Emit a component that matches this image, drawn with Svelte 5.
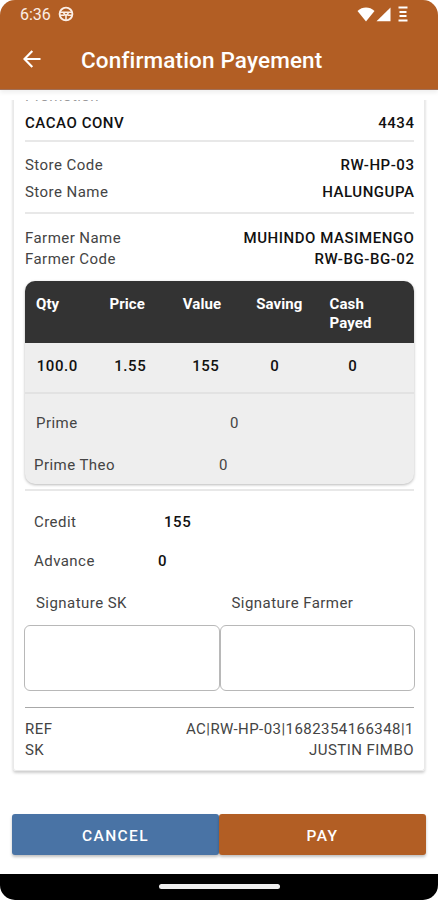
<script>
    const stores = [
        { label: 'Store Code', value: 'RW-HP-03' },
        { label: 'Store Name', value: 'HALUNGUPA' }
    ];

    const farmer = [
        { label: 'Farmer Name', value: 'MUHINDO MASIMENGO' },
        { label: 'Farmer Code', value: 'RW-BG-BG-02' }
    ];

    const columns = ['Qty', 'Price', 'Value', 'Saving', 'Cash Payed'];
    const amounts = ['100.0', '1.55', '155', '0', '0'];

    const references = [
        { label: 'REF', value: 'AC|RW-HP-03|1682354166348|1' },
        { label: 'SK', value: 'JUSTIN FIMBO' }
    ];
</script>

<div class="screen">
    <header>
        <div class="status-bar">
            <span class="time">6:36</span>
            <svg class="status-wheel" viewBox="0 0 16 16" width="16" height="16">
                <circle cx="8" cy="8" r="6.4" fill="none" stroke="#fbeee6" stroke-width="1.9" />
                <path d="M2 6.300h12M2 9.300h4.500M9.500 9.300H14M5.500 7l2.500 2.500L10.500 7M8 9v5" fill="none" stroke="#fbeee6" stroke-width="1.600" />
            </svg>
            <div class="status-right">
                <svg viewBox="0 0 18 15" width="18" height="15">
                    <path d="M0.5 4C5.5-.6 12.5-.6 17.5 4L9 14.5z" fill="#fff" />
                </svg>
                <svg viewBox="0 0 15 15" width="15" height="15">
                    <path d="M0.5 14.3L14.5 0.5v13.800z" fill="#fff" />
                </svg>
                <svg class="bars" viewBox="0 0 10 16" width="10" height="16">
                    <path d="M0.500 1.500h9M1.500 6h7M1.500 10h7M0.500 14.500h9" stroke="#fff" stroke-width="1.900" />
                </svg>
            </div>
        </div>
        <div class="app-bar">
            <button class="back" aria-label="Back">
                <svg viewBox="0 0 18 18" width="18" height="18">
                    <path d="M17.5 9H2M9.3 1L1.5 9l7.800 8" fill="none" stroke="#fff" stroke-width="2.2" />
                </svg>
            </button>
            <h1>Confirmation Payement</h1>
        </div>
    </header>

    <main>
        <div class="card">
            <div class="row promo-label"><span>Promotion</span></div>
            <div class="row promo">
                <b>CACAO CONV</b>
                <b>4434</b>
            </div>
            <hr />
            <div class="stores">
                {#each stores as item}
                    <div class="row">
                        <span>{item.label}</span>
                        <b>{item.value}</b>
                    </div>
                {/each}
            </div>
            <hr />
            <div class="farmer">
                {#each farmer as item}
                    <div class="row">
                        <span>{item.label}</span>
                        <b>{item.value}</b>
                    </div>
                {/each}
            </div>

            <div class="table">
                <div class="table-head">
                    {#each columns as column}
                        <span>{column}</span>
                    {/each}
                </div>
                <div class="table-row">
                    {#each amounts as amount}
                        <b>{amount}</b>
                    {/each}
                </div>
                <div class="prime"><span>Prime</span><span>0</span></div>
                <div class="prime theo"><span>Prime Theo</span><span>0</span></div>
            </div>
            <hr />

            <div class="balance"><span>Credit</span><b>155</b></div>
            <div class="balance advance"><span>Advance</span><b>0</b></div>

            <div class="signatures">
                <div class="signature">
                    <span>Signature SK</span>
                    <div class="box"></div>
                </div>
                <div class="signature">
                    <span>Signature Farmer</span>
                    <div class="box"></div>
                </div>
            </div>

            <hr class="dark" />
            <div class="references">
                {#each references as item}
                    <div class="row">
                        <span>{item.label}</span>
                        <span>{item.value}</span>
                    </div>
                {/each}
            </div>
        </div>
    </main>

    <div class="actions">
        <button class="btn cancel">CANCEL</button>
        <button class="btn pay">PAY</button>
    </div>

    <div class="nav-bar"><div class="handle"></div></div>
</div>

<style>
    :global(body) {
        background: #fff;
    }

    .screen {
        width: 438px;
        height: 900px;
        display: flex;
        flex-direction: column;
        overflow: hidden;
        border-radius: 15px;
        background: #fff;
        color: #444;
        font-family: Roboto, sans-serif;
        font-size: 15px;
        line-height: 20px;
        letter-spacing: 0.45px;
        box-sizing: border-box;
    }

    .screen * {
        box-sizing: border-box;
    }

    header {
        height: 90px;
        flex: none;
        background: #b25e24;
        border-bottom: 1px solid #a17058;
        box-shadow: 0 3px 4px rgba(0, 0, 0, 0.06);
        color: #fff;
    }

    .status-bar {
        display: flex;
        align-items: center;
        height: 28px;
        padding: 0 30px 0 20px;
    }

    .time {
        width: 38px;
        padding-top: 1px;
        font-size: 16px;
        letter-spacing: 0;
        color: #fbeee6;
    }

    .status-right {
        display: flex;
        align-items: center;
        gap: 1px;
        margin-left: auto;
    }

    .bars {
        margin-left: 6px;
    }

    .app-bar {
        display: flex;
        align-items: center;
        height: 62px;
        padding-left: 23px;
    }

    .back {
        display: flex;
        width: 58px;
        padding: 0;
        border: none;
        background: none;
    }

    .app-bar h1 {
        margin: 1px 0 0;
        font-size: 22.5px;
        font-weight: 500;
        letter-spacing: 0.15px;
    }

    main {
        height: 685px;
        flex: none;
        margin-top: 10px;
        padding: 0 13px;
        overflow: hidden;
    }

    /* the list is scrolled, so the card starts above the visible area */
    .card {
        height: 684px;
        margin-top: -13px;
        padding: 0 10px 0 11px;
        border: 1px solid #e9e9e9;
        border-top: none;
        border-radius: 0 0 3px 3px;
        box-shadow: 0 2px 3px rgba(0, 0, 0, 0.2);
    }

    b {
        font-weight: 500;
        color: #111;
        letter-spacing: 0.55px;
        margin-right: -0.5px;
    }

    hr {
        height: 2px;
        margin: 0;
        border: none;
        background: #e8e8e8;
    }

    hr.dark {
        height: 1px;
        background: #a8a8a8;
    }

    .row {
        display: flex;
        justify-content: space-between;
        align-items: center;
    }

    .promo-label {
        height: 18px;
        color: #999;
    }

    .promo {
        height: 35px;
    }

    .stores {
        padding: 9px 0 7px;
    }

    .stores .row {
        height: 27px;
    }

    .farmer {
        padding: 13px 0 11px;
    }

    .farmer .row {
        height: 21.5px;
    }

    .table {
        height: 203px;
        margin-bottom: 5px;
        border-radius: 10px;
        background: #eee;
        box-shadow: 0 1px 3px rgba(0, 0, 0, 0.28);
        overflow: hidden;
    }

    .table-head {
        display: grid;
        grid-template-columns: repeat(5, 73.4px);
        height: 62px;
        padding: 14px 0 0 11px;
        background: #333;
        color: #fff;
        font-weight: 700;
        line-height: 18.5px;
        letter-spacing: 0.1px;
    }

    .table-row {
        display: grid;
        grid-template-columns: 64px 82px 69px 69px 87px;
        align-items: center;
        height: 51px;
        padding-bottom: 3px;
        border-bottom: 2px solid #e2e2e2;
    }

    .table-row b {
        text-align: center;
    }

    .prime {
        display: flex;
        align-items: center;
        height: 42px;
        margin-top: 8px;
        padding-left: 11px;
    }

    .prime span:first-child {
        width: 194px;
    }

    .theo {
        margin-top: 0;
        padding-left: 9px;
    }

    .theo span:first-child {
        width: 185px;
    }

    .balance {
        display: flex;
        align-items: center;
        height: 39px;
        padding-left: 9px;
    }

    hr + .balance {
        margin-top: 11px;
    }

    .balance span {
        width: 130px;
    }

    .advance span {
        width: 124px;
    }

    .signatures {
        display: flex;
        margin: 0 -1px 16px;
    }

    .signature {
        flex: 1;
    }

    .signature span {
        display: flex;
        align-items: center;
        height: 45px;
        padding-left: 12px;
    }

    .box {
        height: 66px;
        border: 1px solid #b8b8b8;
        border-radius: 6px;
    }

    .references {
        padding-top: 10px;
    }

    .references .row {
        height: 21px;
    }

    .actions {
        display: flex;
        flex: none;
        height: 41px;
        margin-top: 29px;
        padding: 0 12px;
    }

    .btn {
        flex: 1;
        padding: 2px 0 0;
        border: none;
        border-radius: 3px;
        color: #fff;
        font: 500 15.5px Roboto, sans-serif;
        letter-spacing: 1.4px;
        box-shadow: 0 2px 3px rgba(0, 0, 0, 0.25);
    }

    .cancel {
        background: #4973a5;
    }

    .pay {
        background: #b25e24;
    }

    .nav-bar {
        display: flex;
        justify-content: center;
        height: 26px;
        margin-top: auto;
        background: #000;
    }

    .handle {
        width: 121px;
        height: 5px;
        margin-top: 10px;
        border-radius: 3px;
        background: #eee;
    }
</style>
